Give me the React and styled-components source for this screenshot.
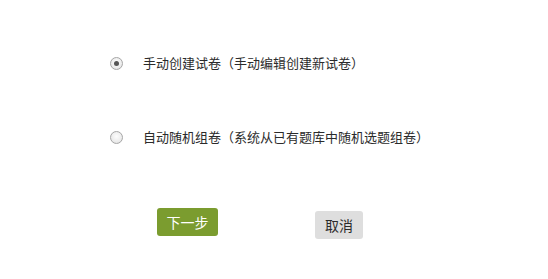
import React from "react";
import styled, { createGlobalStyle } from "styled-components";

const Global = createGlobalStyle`
  html, body { margin: 0; padding: 0; background: #fff; }
  body { font-family: "Noto Sans CJK SC", "Noto Sans", sans-serif; color: #333; }
`;

const Page = styled.div`
  width: 548px;
  height: 279px;
  box-sizing: border-box;
  padding: 50px 0 0 110px;
  display: flex;
  flex-direction: column;
`;

const Options = styled.div`
  display: flex;
  flex-direction: column;
  gap: 48px;
`;

const Option = styled.label`
  display: flex;
  align-items: center;
  height: 26px;
  gap: 20px;
  font-size: 13px;
  line-height: 26px;
  color: #2b2b2b;
  text-spacing-trim: space-all;
  cursor: pointer;
`;

const Radio = styled.span`
  width: 13px;
  height: 13px;
  box-sizing: border-box;
  border-radius: 50%;
  border: 1px solid #a6a6a6;
  background: radial-gradient(circle at 50% 40%, #fdfdfd 0%, #ececec 60%, #dcdcdc 100%);
  display: flex;
  align-items: center;
  justify-content: center;
  margin-top: 1px;
  flex: none;
  &::after {
    content: "";
    width: 5px;
    height: 5px;
    border-radius: 50%;
    background: ${(p) => (p.$checked ? "#555" : "transparent")};
  }
`;

const Buttons = styled.div`
  display: flex;
  align-items: flex-start;
  gap: 97px;
  margin-top: 58px;
  padding-left: 47px;
`;

const Button = styled.button`
  width: ${(p) => (p.$primary ? "61px" : "48px")};
  height: 28px;
  padding: 0;
  margin-top: ${(p) => (p.$primary ? "0" : "3px")};
  border: none;
  border-radius: 3px;
  background: ${(p) => (p.$primary ? "#7b9c2f" : "#dedede")};
  color: ${(p) => (p.$primary ? "#fff" : "#2b2b2b")};
  font-family: "Noto Sans CJK SC", "Noto Sans", sans-serif;
  font-size: 14px;
  line-height: 28px;
  text-align: center;
  cursor: pointer;
`;

export default function App() {
  return (
    <>
      <Global />
      <Page>
        <Options>
          <Option>
            <Radio $checked />
            手动创建试卷（手动编辑创建新试卷）
          </Option>
          <Option>
            <Radio />
            自动随机组卷（系统从已有题库中随机选题组卷）
          </Option>
        </Options>
        <Buttons>
          <Button $primary>下一步</Button>
          <Button>取消</Button>
        </Buttons>
      </Page>
    </>
  );
}
